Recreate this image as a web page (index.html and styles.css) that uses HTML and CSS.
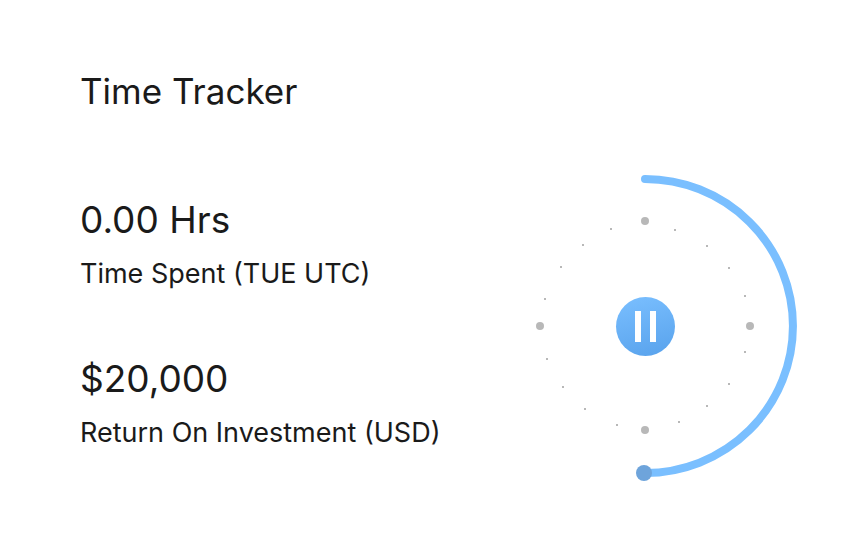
FILE: index.html
```html
<!DOCTYPE html>
<html lang="en">
<head>
<meta charset="utf-8">
<meta name="viewport" content="width=device-width, initial-scale=1">
<title>Time Tracker</title>
<link rel="stylesheet" href="styles.css">
</head>
<body>
<main class="tracker">
  <h1 class="title">Time Tracker</h1>
  <div class="content">
    <dl class="stats">
      <div class="stat">
        <dd class="value">0.00 Hrs</dd>
        <dt class="label">Time Spent (TUE UTC)</dt>
      </div>
      <div class="stat">
        <dd class="value">$20,000</dd>
        <dt class="label">Return On Investment (USD)</dt>
      </div>
    </dl>
    <div class="dial">
      <svg class="face" viewBox="490 170 310 312" aria-hidden="true">
        <path d="M645 179A148 147 0 0 1 645 473" fill="none" stroke="#7abfff" stroke-width="8" stroke-linecap="round"/>
        <circle cx="644" cy="473" r="8" fill="#6ea4db"/>
        <g fill="#b8b8b8">
          <circle cx="645" cy="221" r="4"/><circle cx="750" cy="326" r="4"/>
          <circle cx="645" cy="430" r="4"/><circle cx="540" cy="326" r="4"/>
        </g>
        <path d="M674 230h2m30 16h2m20 22h2m14 28h2m-2 56h2m-18 32h2m-24 22h2m-30 16h2m-64 3h2m-34-16h2m-24-22h2m-18-28h2m-4-60h2m14-32h2m20-22h2m26-16h2" fill="none" stroke="#b8b8b8" stroke-width="2"/>
      </svg>
      <button class="pause" type="button" aria-label="Pause timer">
        <svg class="bars" viewBox="0 0 21 31" aria-hidden="true"><path d="M0 0h6v31H0zM15 0h6v31h-6z" fill="#fff"/></svg>
      </button>
    </div>
  </div>
</main>
</body>
</html>
```
FILE: styles.css
```css
* { box-sizing: border-box; }
body {
  margin: 0;
  background: #fff;
  color: #1a1a1a;
  font-family: Inter, "Liberation Sans", sans-serif;
}
.tracker { padding: 67px 53px 56px 80px; }
.title, .value {
  margin: 0;
  font-size: 37px;
  line-height: 48px;
  font-weight: 400;
}
.title { font-size: 35px; }
.content {
  display: flex;
  justify-content: space-between;
  align-items: flex-start;
  margin-top: 55px;
}
.stats {
  display: grid;
  gap: 64px;
  margin: 0;
  padding-top: 26px;
}
.stat { display: grid; gap: 12px; }
.label {
  font-size: 27px;
  line-height: 35px;
}
.dial {
  display: grid;
  place-items: center;
  flex: 0 0 310px;
}
.dial > * { grid-area: 1 / 1; }
.face { display: block; width: 100%; }
.pause {
  display: grid;
  place-items: center;
  width: 59px;
  height: 59px;
  padding: 0;
  border: 0;
  border-radius: 50%;
  background: linear-gradient(165deg, #7abfff, #58a2ec);
}
.bars { width: 21px; height: 31px; }
```
